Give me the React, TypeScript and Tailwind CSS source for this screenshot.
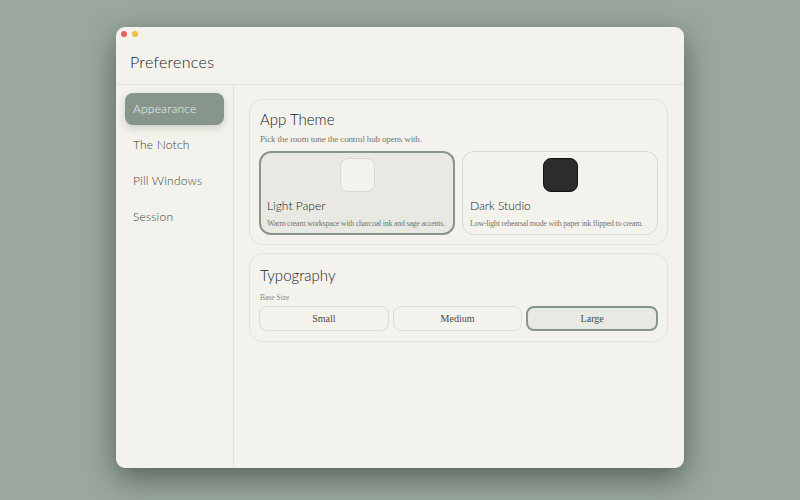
const hand = "font-['Lato','Liberation_Sans',sans-serif] font-light";
const serif = "font-['Liberation_Serif',serif]";

function NavItem({ label, active }: { label: string; active?: boolean }) {
  return (
    <div
      className={`h-8 flex items-center px-2 rounded-lg text-[12px] tracking-[0.2px] ${hand} ${
        active ? "bg-[#87968b] text-[#f4f2ec] shadow-[0_3px_8px_rgba(60,70,60,0.22)]" : "text-[#3f3f3b]"
      }`}
    >
      {label}
    </div>
  );
}

function ThemeCard({ title, desc, dark, active }: { title: string; desc: string; dark?: boolean; active?: boolean }) {
  return (
    <div
      className={`flex-1 min-w-0 h-[84px] rounded-xl flex flex-col ${
        active ? "bg-[#e8e9e3] border-2 border-[#87968b] px-[6px] pt-[5px]" : "bg-[#f4f2ec] border border-[#d9d9d1] px-[7px] pt-[6px]"
      }`}
    >
      <div
        className={`self-center w-[35px] h-[34px] shrink-0 rounded-lg border ${
          dark ? "bg-[#2c2c2a] border-[#111111]" : "bg-[#f4f2ec] border-[#d9d9d1]"
        }`}
      />
      <div className={`mt-[4px] text-[12px] leading-[20px] text-[#222220] ${hand}`}>{title}</div>
      <div className={`mt-[2px] text-[8px] leading-[12px] tracking-[-0.25px] whitespace-nowrap text-[#77776f] ${serif}`}>{desc}</div>
    </div>
  );
}

function SizeButton({ label, active }: { label: string; active?: boolean }) {
  return (
    <div
      className={`flex-1 min-w-0 h-[25px] rounded-lg flex items-center justify-center text-[10px] text-[#4a4a46] ${serif} ${
        active ? "bg-[#e8e9e3] border-2 border-[#87968b]" : "border border-[#dddcd4]"
      }`}
    >
      {label}
    </div>
  );
}

export default function App() {
  return (
    <div className="w-[800px] h-[500px] overflow-hidden bg-[#9aa89d] flex justify-center pt-[27px]">
      <div className="w-[568px] h-[441px] rounded-[9px] overflow-hidden bg-[#f4f2ec] flex flex-col shadow-[0_10px_30px_rgba(40,50,42,0.6)]">
        <div className="h-[58px] shrink-0 border-b border-[#e3e2db] px-[14px] flex flex-col">
          <div className="flex gap-[5px] pt-1 -ml-[9px]">
            <span className="w-[6px] h-[6px] rounded-full bg-[#ee5f58]" />
            <span className="w-[6px] h-[6px] rounded-full bg-[#f6bd3b]" />
          </div>
          <div className={`mt-[14px] text-[16px] leading-[22px] tracking-[0.3px] text-[#222220] ${hand}`}>Preferences</div>
        </div>
        <div className="flex flex-1 min-h-0">
          <div className="w-[118px] shrink-0 border-r border-[#e3e2db] px-[9px] pt-2 flex flex-col gap-1">
            <NavItem label="Appearance" active />
            <NavItem label="The Notch" />
            <NavItem label="Pill Windows" />
            <NavItem label="Session" />
          </div>
          <div className="flex-1 min-w-0 pl-[15px] pr-[16px] pt-[14px] flex flex-col gap-2">
            <div className="h-[146px] rounded-[14px] border border-[#e3e2db] px-[9px] pt-[8px]">
              <div className={`ml-px text-[15px] leading-[22px] text-[#222220] ${hand}`}>App Theme</div>
              <div className={`ml-px mt-[2px] text-[9px] leading-[14px] tracking-[-0.15px] text-[#77776f] ${serif}`}>
                Pick the room tone the control hub opens with.
              </div>
              <div className="mt-[5px] flex gap-[7px]">
                <ThemeCard active title="Light Paper" desc="Warm cream workspace with charcoal ink and sage accents." />
                <ThemeCard dark title="Dark Studio" desc="Low-light rehearsal mode with paper ink flipped to cream." />
              </div>
            </div>
            <div className="h-[89px] rounded-[14px] border border-[#e3e2db] px-[9px] pt-[9px]">
              <div className={`ml-px text-[15px] leading-[24px] text-[#222220] ${hand}`}>Typography</div>
              <div className={`ml-px mt-[5px] text-[7.5px] leading-[12px] text-[#8a8a82] ${serif}`}>Base Size</div>
              <div className="mt-[2px] flex gap-1">
                <SizeButton label="Small" />
                <SizeButton label="Medium" />
                <SizeButton label="Large" active />
              </div>
            </div>
          </div>
        </div>
      </div>
    </div>
  );
}
